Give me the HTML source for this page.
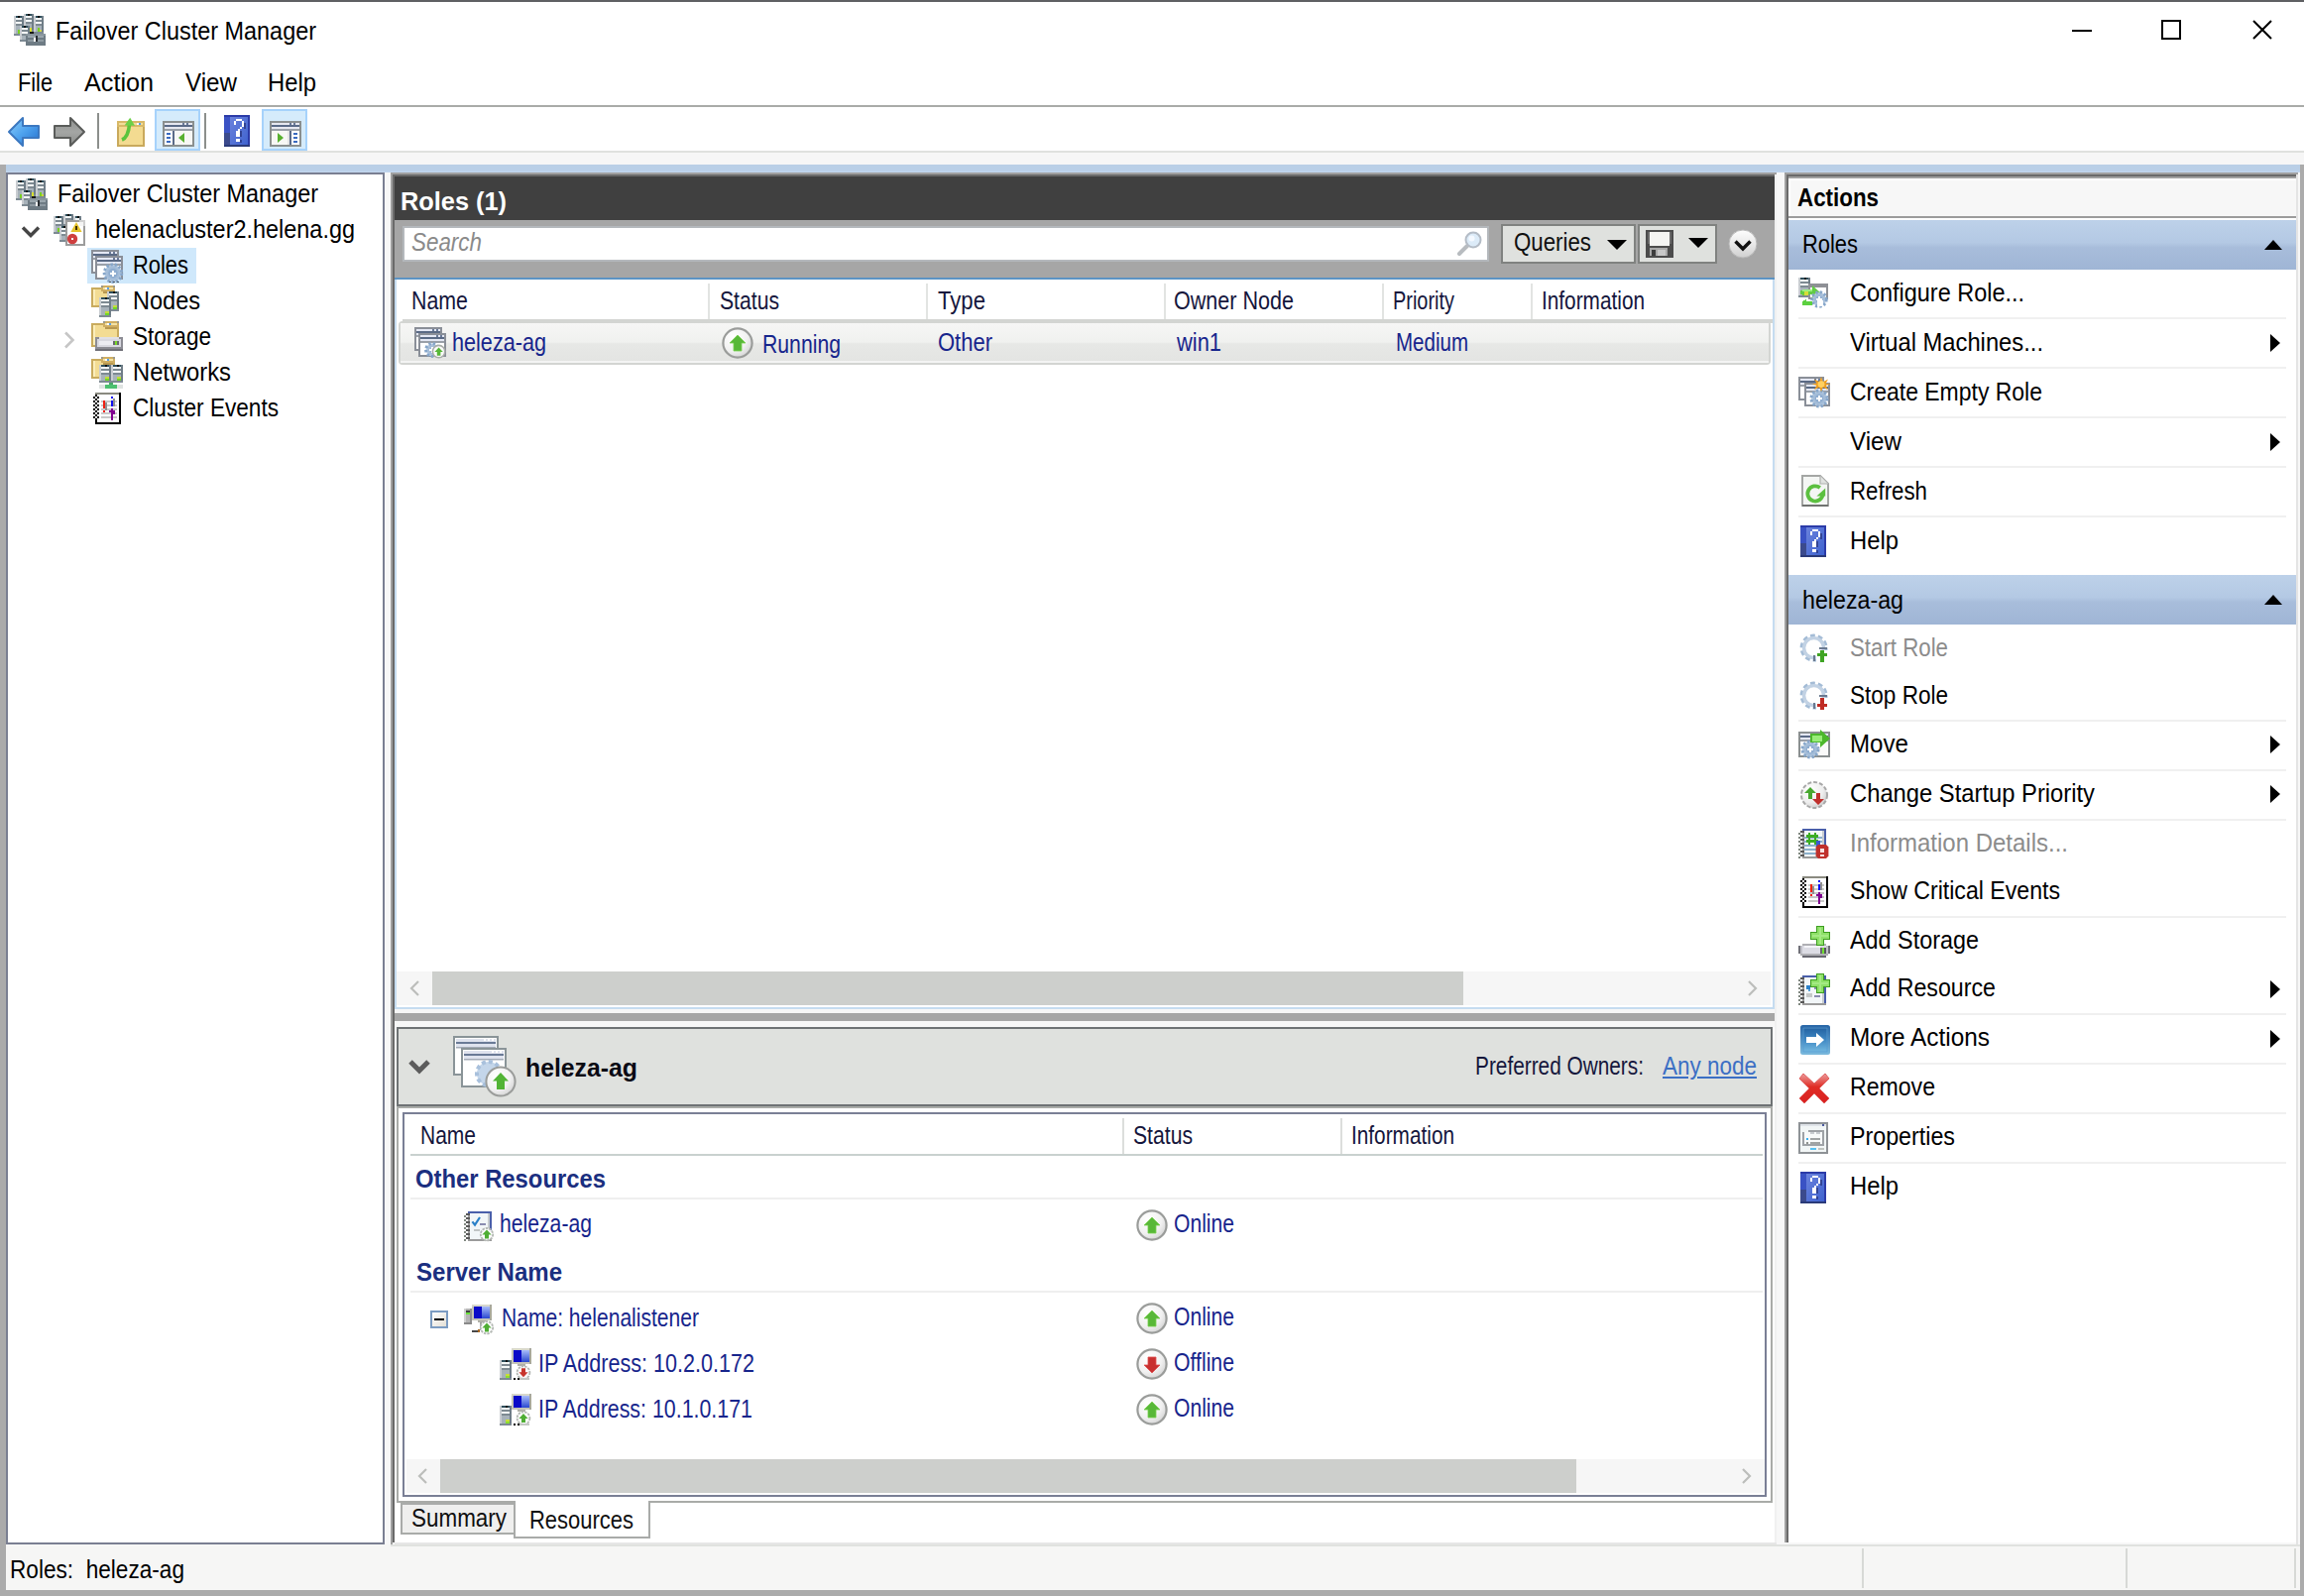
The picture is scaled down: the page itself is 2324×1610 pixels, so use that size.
<!DOCTYPE html>
<html lang="en"><head><meta charset="utf-8"><title>Failover Cluster Manager</title>
<style>
html,body{margin:0;padding:0;background:#fff;}
body{width:2324px;height:1610px;position:relative;overflow:hidden;font-family:"Liberation Sans",sans-serif;}
div,span,svg{position:absolute;box-sizing:border-box;}
span{white-space:pre;transform-origin:0 0;}
svg{overflow:visible;}
</style></head><body>
<div style="left:0px;top:0px;width:2324px;height:2px;background:#5f6063;"></div>
<div style="left:0px;top:106px;width:2324px;height:2px;background:#a9aba8;"></div>
<div style="left:0px;top:152px;width:2324px;height:2px;background:#dfe1de;"></div>
<div style="left:0px;top:154px;width:2324px;height:12px;background:#f6f6f6;"></div>
<div style="left:0px;top:166px;width:2324px;height:1444px;background:#f7f7f7;"></div>
<div style="left:6px;top:166px;width:2314px;height:8px;background:linear-gradient(#b9cfe6,#b9cfe8 70%,#c3d6ee);"></div>
<div style="left:0px;top:166px;width:6px;height:1444px;background:#ababab;"></div>
<div style="left:2320px;top:166px;width:4px;height:1444px;background:#ababab;"></div>
<div style="left:0px;top:1604px;width:2324px;height:6px;background:#ababab;"></div>
<div style="left:156px;top:110px;width:46px;height:42px;background:#d5ebfb;border:2px solid #a6d2fb;"></div>
<div style="left:264px;top:110px;width:46px;height:42px;background:#d5ebfb;border:2px solid #a6d2fb;"></div>
<div style="left:98px;top:114px;width:2px;height:36px;background:#8c8f8c;"></div>
<div style="left:206px;top:114px;width:2px;height:36px;background:#8c8f8c;"></div>
<div style="left:6px;top:174px;width:382px;height:1384px;background:#fff;border:2px solid #7a7f92;"></div>
<div style="left:88px;top:250px;width:110px;height:36px;background:#cfe8fb;"></div>
<div style="left:394px;top:174px;width:1398px;height:1384px;background:#fff;"></div>
<div style="left:394px;top:174px;width:1398px;height:2px;background:#a0a0a0;"></div>
<div style="left:394px;top:174px;width:2px;height:1384px;background:#a0a0a0;"></div>
<div style="left:396px;top:176px;width:1394px;height:2px;background:#6a6a6a;"></div>
<div style="left:396px;top:176px;width:2px;height:1380px;background:#6a6a6a;"></div>
<div style="left:1790px;top:176px;width:2px;height:1382px;background:#f0f0f0;"></div>
<div style="left:398px;top:178px;width:1392px;height:44px;background:#404040;"></div>
<div style="left:398px;top:222px;width:1392px;height:58px;background:#a6a6a6;"></div>
<div style="left:398px;top:280px;width:1392px;height:2px;background:#5b93c4;"></div>
<div style="left:406px;top:228px;width:1096px;height:36px;background:#fff;border:2px solid #b4b8bc;"></div>
<div style="left:1514px;top:226px;width:136px;height:40px;background:#dfe1de;border:2px solid #808280;"></div>
<div style="left:1652px;top:226px;width:80px;height:40px;background:#dfe1de;border:2px solid #808280;"></div>
<div style="left:398px;top:282px;width:2px;height:736px;background:#c5dcf0;"></div>
<div style="left:1788px;top:282px;width:2px;height:736px;background:#c5dcf0;"></div>
<div style="left:398px;top:1016px;width:1392px;height:2px;background:#c5dcf0;"></div>
<div style="left:714px;top:286px;width:2px;height:36px;background:#e2e4e2;"></div>
<div style="left:934px;top:286px;width:2px;height:36px;background:#e2e4e2;"></div>
<div style="left:1174px;top:286px;width:2px;height:36px;background:#e2e4e2;"></div>
<div style="left:1394px;top:286px;width:2px;height:36px;background:#e2e4e2;"></div>
<div style="left:1544px;top:286px;width:2px;height:36px;background:#e2e4e2;"></div>
<div style="left:406px;top:322px;width:1382px;height:4px;background:#d3d5d2;"></div>
<div style="left:402px;top:324px;width:1384px;height:44px;background:#d3d5d2;border-radius:4px;"></div>
<div style="left:404px;top:326px;width:1380px;height:40px;background:linear-gradient(#f6f6f5,#f0f1ef 48%,#e7e8e6 52%,#e3e4e2);"></div>
<div style="left:404px;top:364px;width:1380px;height:2px;background:#f4f4f4;"></div>
<div style="left:400px;top:980px;width:1386px;height:34px;background:#f6f6f6;"></div>
<div style="left:436px;top:980px;width:1040px;height:34px;background:#cdcfcc;"></div>
<div style="left:398px;top:1018px;width:1392px;height:4px;background:#f7f7f7;"></div>
<div style="left:398px;top:1022px;width:1392px;height:8px;background:#a6a6a6;"></div>
<div style="left:398px;top:1030px;width:1392px;height:6px;background:#f7f7f7;"></div>
<div style="left:400px;top:1036px;width:1388px;height:80px;background:#dfe1de;border:2px solid #6e7274;"></div>
<div style="left:400px;top:1116px;width:1388px;height:400px;background:#fff;border:2px solid #a9aba8;"></div>
<div style="left:406px;top:1122px;width:1376px;height:388px;background:#fff;border:2px solid #7a7f95;"></div>
<div style="left:1132px;top:1128px;width:2px;height:36px;background:#dcdedc;"></div>
<div style="left:1352px;top:1128px;width:2px;height:36px;background:#dcdedc;"></div>
<div style="left:414px;top:1164px;width:1364px;height:2px;background:#c9d1cf;"></div>
<div style="left:414px;top:1208px;width:1364px;height:2px;background:#efefef;"></div>
<div style="left:414px;top:1302px;width:1364px;height:2px;background:#efefef;"></div>
<div style="left:410px;top:1472px;width:1370px;height:34px;background:#f6f6f6;"></div>
<div style="left:444px;top:1472px;width:1146px;height:34px;background:#cdcfcc;"></div>
<div style="left:398px;top:1516px;width:1392px;height:40px;background:#fff;"></div>
<div style="left:654px;top:1514px;width:1134px;height:2px;background:#a9aba8;"></div>
<div style="left:404px;top:1516px;width:116px;height:32px;background:#efefee;border:2px solid #a9aba9;"></div>
<div style="left:518px;top:1514px;width:138px;height:38px;background:#fff;border:2px solid #a9aba9;border-top:none;"></div>
<div style="left:398px;top:1556px;width:1394px;height:2px;background:#e6e6e6;"></div>
<div style="left:1800px;top:174px;width:518px;height:1382px;background:#fff;"></div>
<div style="left:1800px;top:174px;width:518px;height:2px;background:#a0a0a0;"></div>
<div style="left:1800px;top:174px;width:2px;height:1382px;background:#a0a0a0;"></div>
<div style="left:1802px;top:176px;width:514px;height:2px;background:#6a6a6a;"></div>
<div style="left:1802px;top:176px;width:2px;height:1380px;background:#6a6a6a;"></div>
<div style="left:1804px;top:178px;width:512px;height:2px;background:#a0a0a0;"></div>
<div style="left:2316px;top:176px;width:2px;height:1382px;background:#e4e4e4;"></div>
<div style="left:1806px;top:182px;width:510px;height:36px;background:#f7f7f7;"></div>
<div style="left:1804px;top:218px;width:512px;height:2px;background:#9c9c9c;"></div>
<div style="left:1804px;top:222px;width:512px;height:50px;background:linear-gradient(#bdd1e9,#b4c9e4 45%,#a8bddb 55%,#9fb5d5);"></div>
<div style="left:1804px;top:580px;width:512px;height:50px;background:linear-gradient(#bdd1e9,#b4c9e4 45%,#a8bddb 55%,#9fb5d5);"></div>
<div style="left:1814px;top:320px;width:492px;height:2px;background:#f0f0f0;"></div>
<div style="left:1814px;top:370px;width:492px;height:2px;background:#f0f0f0;"></div>
<div style="left:1814px;top:420px;width:492px;height:2px;background:#f0f0f0;"></div>
<div style="left:1814px;top:470px;width:492px;height:2px;background:#f0f0f0;"></div>
<div style="left:1814px;top:520px;width:492px;height:2px;background:#f0f0f0;"></div>
<div style="left:1814px;top:726px;width:492px;height:2px;background:#f0f0f0;"></div>
<div style="left:1814px;top:776px;width:492px;height:2px;background:#f0f0f0;"></div>
<div style="left:1814px;top:826px;width:492px;height:2px;background:#f0f0f0;"></div>
<div style="left:1814px;top:924px;width:492px;height:2px;background:#f0f0f0;"></div>
<div style="left:1814px;top:1022px;width:492px;height:2px;background:#f0f0f0;"></div>
<div style="left:1814px;top:1072px;width:492px;height:2px;background:#f0f0f0;"></div>
<div style="left:1814px;top:1122px;width:492px;height:2px;background:#f0f0f0;"></div>
<div style="left:1814px;top:1172px;width:492px;height:2px;background:#f0f0f0;"></div>
<div style="left:6px;top:1558px;width:2314px;height:46px;background:#f6f6f5;"></div>
<div style="left:394px;top:1558px;width:1926px;height:2px;background:#e0e2df;"></div>
<div style="left:1878px;top:1562px;width:2px;height:40px;background:#d7d9d6;"></div>
<div style="left:2144px;top:1562px;width:2px;height:40px;background:#d7d9d6;"></div>
<div style="left:2314px;top:1562px;width:2px;height:40px;background:#d7d9d6;"></div>
<span style="left:56.0px;top:18.8px;font-size:25px;line-height:25px;color:#000;transform:scaleX(0.9370);">Failover Cluster Manager</span>
<span style="left:18.0px;top:70.8px;font-size:25px;line-height:25px;color:#000;transform:scaleX(0.8686);">File</span>
<span style="left:85.0px;top:70.8px;font-size:25px;line-height:25px;color:#000;transform:scaleX(1.0074);">Action</span>
<span style="left:187.0px;top:70.8px;font-size:25px;line-height:25px;color:#000;transform:scaleX(0.9674);">View</span>
<span style="left:270.0px;top:70.8px;font-size:25px;line-height:25px;color:#000;transform:scaleX(0.9529);">Help</span>
<div style="left:2090px;top:30px;width:20px;height:2px;background:#000;"></div>
<div style="left:2180px;top:20px;width:20px;height:20px;border:2px solid #000;"></div>
<svg style="left:2272px;top:20px" width="20" height="20"><path d="M1 1L19 19M19 1L1 19" stroke="#000" stroke-width="2" fill="none"/></svg>
<span style="left:58.0px;top:182.8px;font-size:25px;line-height:25px;color:#000;transform:scaleX(0.9370);">Failover Cluster Manager</span>
<span style="left:96.0px;top:218.8px;font-size:25px;line-height:25px;color:#000;transform:scaleX(0.9378);">helenacluster2.helena.gg</span>
<span style="left:134.0px;top:254.8px;font-size:25px;line-height:25px;color:#000;transform:scaleX(0.8761);">Roles</span>
<span style="left:134.0px;top:290.8px;font-size:25px;line-height:25px;color:#000;transform:scaleX(0.9410);">Nodes</span>
<span style="left:134.0px;top:326.8px;font-size:25px;line-height:25px;color:#000;transform:scaleX(0.9022);">Storage</span>
<span style="left:134.0px;top:362.8px;font-size:25px;line-height:25px;color:#000;transform:scaleX(0.9502);">Networks</span>
<span style="left:134.0px;top:398.8px;font-size:25px;line-height:25px;color:#000;transform:scaleX(0.9043);">Cluster Events</span>
<span style="left:404.0px;top:190.0px;font-size:26px;line-height:26px;color:#fff;font-weight:700;transform:scaleX(0.9744);">Roles (1)</span>
<span style="left:415.0px;top:231.8px;font-size:25px;line-height:25px;color:#8a8a8a;font-style:italic;transform:scaleX(0.8963);">Search</span>
<span style="left:1527.0px;top:231.8px;font-size:25px;line-height:25px;color:#101010;transform:scaleX(0.8910);">Queries</span>
<span style="left:415.0px;top:290.8px;font-size:25px;line-height:25px;color:#15163c;transform:scaleX(0.8547);">Name</span>
<span style="left:726.0px;top:290.8px;font-size:25px;line-height:25px;color:#15163c;transform:scaleX(0.8466);">Status</span>
<span style="left:946.0px;top:290.8px;font-size:25px;line-height:25px;color:#15163c;transform:scaleX(0.8856);">Type</span>
<span style="left:1184.0px;top:290.8px;font-size:25px;line-height:25px;color:#15163c;transform:scaleX(0.8621);">Owner Node</span>
<span style="left:1405.0px;top:290.8px;font-size:25px;line-height:25px;color:#15163c;transform:scaleX(0.7969);">Priority</span>
<span style="left:1555.0px;top:290.8px;font-size:25px;line-height:25px;color:#15163c;transform:scaleX(0.8316);">Information</span>
<span style="left:456.0px;top:332.8px;font-size:25px;line-height:25px;color:#17258c;transform:scaleX(0.8651);">heleza-ag</span>
<span style="left:769.0px;top:334.8px;font-size:25px;line-height:25px;color:#17258c;transform:scaleX(0.8482);">Running</span>
<span style="left:946.0px;top:332.8px;font-size:25px;line-height:25px;color:#17258c;transform:scaleX(0.8796);">Other</span>
<span style="left:1187.0px;top:332.8px;font-size:25px;line-height:25px;color:#17258c;transform:scaleX(0.8751);">win1</span>
<span style="left:1408.0px;top:332.8px;font-size:25px;line-height:25px;color:#17258c;transform:scaleX(0.8209);">Medium</span>
<span style="left:530.0px;top:1064.8px;font-size:25px;line-height:25px;color:#0a0a14;font-weight:700;transform:scaleX(0.9918);">heleza-ag</span>
<span style="left:1488.0px;top:1062.8px;font-size:25px;line-height:25px;color:#15163c;transform:scaleX(0.8323);">Preferred Owners:</span>
<span style="left:1677.0px;top:1062.8px;font-size:25px;line-height:25px;color:#3c6fc4;text-decoration:underline;transform:scaleX(0.8993);">Any node</span>
<span style="left:424.0px;top:1132.8px;font-size:25px;line-height:25px;color:#15163c;transform:scaleX(0.8397);">Name</span>
<span style="left:1143.0px;top:1132.8px;font-size:25px;line-height:25px;color:#15163c;transform:scaleX(0.8466);">Status</span>
<span style="left:1363.0px;top:1132.8px;font-size:25px;line-height:25px;color:#15163c;transform:scaleX(0.8316);">Information</span>
<span style="left:419.0px;top:1176.8px;font-size:25px;line-height:25px;color:#1b2f80;font-weight:700;transform:scaleX(0.9530);">Other Resources</span>
<span style="left:420.0px;top:1270.8px;font-size:25px;line-height:25px;color:#1b2f80;font-weight:700;transform:scaleX(0.9615);">Server Name</span>
<span style="left:504.0px;top:1221.8px;font-size:25px;line-height:25px;color:#17258c;transform:scaleX(0.8469);">heleza-ag</span>
<span style="left:506.0px;top:1316.8px;font-size:25px;line-height:25px;color:#17258c;transform:scaleX(0.8423);">Name: helenalistener</span>
<span style="left:543.0px;top:1362.8px;font-size:25px;line-height:25px;color:#17258c;transform:scaleX(0.8633);">IP Address: 10.2.0.172</span>
<span style="left:543.0px;top:1408.8px;font-size:25px;line-height:25px;color:#17258c;transform:scaleX(0.8554);">IP Address: 10.1.0.171</span>
<span style="left:1184.0px;top:1221.8px;font-size:25px;line-height:25px;color:#17258c;transform:scaleX(0.8441);">Online</span>
<span style="left:1184.0px;top:1315.8px;font-size:25px;line-height:25px;color:#17258c;transform:scaleX(0.8441);">Online</span>
<span style="left:1184.0px;top:1361.8px;font-size:25px;line-height:25px;color:#17258c;transform:scaleX(0.8494);">Offline</span>
<span style="left:1184.0px;top:1407.8px;font-size:25px;line-height:25px;color:#17258c;transform:scaleX(0.8441);">Online</span>
<span style="left:415.0px;top:1518.8px;font-size:25px;line-height:25px;color:#101010;transform:scaleX(0.8975);">Summary</span>
<span style="left:534.0px;top:1520.8px;font-size:25px;line-height:25px;color:#101010;transform:scaleX(0.8787);">Resources</span>
<span style="left:1813.0px;top:186.8px;font-size:25px;line-height:25px;color:#000;font-weight:700;transform:scaleX(0.8943);">Actions</span>
<span style="left:1818.0px;top:233.8px;font-size:25px;line-height:25px;color:#000;transform:scaleX(0.8761);">Roles</span>
<span style="left:1818.0px;top:592.8px;font-size:25px;line-height:25px;color:#000;transform:scaleX(0.9289);">heleza-ag</span>
<span style="left:1866.0px;top:282.8px;font-size:25px;line-height:25px;color:#000;transform:scaleX(0.9381);">Configure Role...</span>
<span style="left:1866.0px;top:332.8px;font-size:25px;line-height:25px;color:#000;transform:scaleX(0.9503);">Virtual Machines...</span>
<span style="left:1866.0px;top:382.8px;font-size:25px;line-height:25px;color:#000;transform:scaleX(0.9185);">Create Empty Role</span>
<span style="left:1866.0px;top:432.8px;font-size:25px;line-height:25px;color:#000;transform:scaleX(0.9674);">View</span>
<span style="left:1866.0px;top:482.8px;font-size:25px;line-height:25px;color:#000;transform:scaleX(0.8910);">Refresh</span>
<span style="left:1866.0px;top:532.8px;font-size:25px;line-height:25px;color:#000;transform:scaleX(0.9529);">Help</span>
<span style="left:1866.0px;top:640.8px;font-size:25px;line-height:25px;color:#8c8c8c;transform:scaleX(0.8905);">Start Role</span>
<span style="left:1866.0px;top:688.8px;font-size:25px;line-height:25px;color:#000;transform:scaleX(0.9017);">Stop Role</span>
<span style="left:1866.0px;top:737.8px;font-size:25px;line-height:25px;color:#000;transform:scaleX(0.9650);">Move</span>
<span style="left:1866.0px;top:787.8px;font-size:25px;line-height:25px;color:#000;transform:scaleX(0.9505);">Change Startup Priority</span>
<span style="left:1866.0px;top:837.8px;font-size:25px;line-height:25px;color:#8c8c8c;transform:scaleX(0.9596);">Information Details...</span>
<span style="left:1866.0px;top:885.8px;font-size:25px;line-height:25px;color:#000;transform:scaleX(0.9248);">Show Critical Events</span>
<span style="left:1866.0px;top:935.8px;font-size:25px;line-height:25px;color:#000;transform:scaleX(0.9353);">Add Storage</span>
<span style="left:1866.0px;top:983.8px;font-size:25px;line-height:25px;color:#000;transform:scaleX(0.9278);">Add Resource</span>
<span style="left:1866.0px;top:1033.8px;font-size:25px;line-height:25px;color:#000;transform:scaleX(0.9757);">More Actions</span>
<span style="left:1866.0px;top:1083.8px;font-size:25px;line-height:25px;color:#000;transform:scaleX(0.9238);">Remove</span>
<span style="left:1866.0px;top:1133.8px;font-size:25px;line-height:25px;color:#000;transform:scaleX(0.9302);">Properties</span>
<span style="left:1866.0px;top:1183.8px;font-size:25px;line-height:25px;color:#000;transform:scaleX(0.9529);">Help</span>
<span style="left:10.0px;top:1570.8px;font-size:25px;line-height:25px;color:#000;transform:scaleX(0.9046);">Roles:  heleza-ag</span>
<svg style="left:14px;top:14px" width="32" height="32" viewBox="0 0 16 16" shape-rendering="crispEdges"><rect x="5" y="0" width="5" height="9" fill="#a7b2ba"/><rect x="5" y="0" width="1" height="9" fill="#c9cdd1"/><rect x="9" y="0" width="1" height="9" fill="#6f7d87"/><rect x="6" y="0" width="3" height="1" fill="#2f4f5c"/><rect x="7" y="0" width="1" height="1" fill="#101010"/><rect x="6" y="1" width="3" height="1" fill="#f4f8f8"/><rect x="6" y="2" width="3" height="1" fill="#7e8a92"/><rect x="6" y="3" width="3" height="1" fill="#f4f8f8"/><rect x="6" y="4" width="3" height="1" fill="#7e8a92"/><rect x="5" y="8" width="5" height="1" fill="#7d8a93"/><rect x="0" y="1" width="5" height="10" fill="#a7b2ba"/><rect x="0" y="1" width="1" height="10" fill="#c9cdd1"/><rect x="4" y="1" width="1" height="10" fill="#6f7d87"/><rect x="1" y="1" width="3" height="1" fill="#2f4f5c"/><rect x="2" y="1" width="1" height="1" fill="#101010"/><rect x="1" y="2" width="3" height="1" fill="#f4f8f8"/><rect x="1" y="3" width="3" height="1" fill="#7e8a92"/><rect x="1" y="4" width="3" height="1" fill="#f4f8f8"/><rect x="1" y="5" width="3" height="1" fill="#7e8a92"/><rect x="2" y="8" width="1" height="2" fill="#7ad022"/><rect x="0" y="10" width="5" height="1" fill="#7d8a93"/><rect x="10" y="1" width="5" height="9" fill="#a7b2ba"/><rect x="10" y="1" width="1" height="9" fill="#c9cdd1"/><rect x="14" y="1" width="1" height="9" fill="#6f7d87"/><rect x="11" y="1" width="3" height="1" fill="#2f4f5c"/><rect x="12" y="1" width="1" height="1" fill="#101010"/><rect x="11" y="2" width="3" height="1" fill="#f4f8f8"/><rect x="11" y="3" width="3" height="1" fill="#7e8a92"/><rect x="11" y="4" width="3" height="1" fill="#f4f8f8"/><rect x="11" y="5" width="3" height="1" fill="#7e8a92"/><rect x="12" y="7" width="1" height="2" fill="#7ad022"/><rect x="10" y="9" width="5" height="1" fill="#7d8a93"/><rect x="8" y="7" width="1" height="2" fill="#d8e030"/><rect x="13" y="8" width="1" height="1" fill="#d0d840"/><rect x="3" y="6" width="5" height="8" fill="#a7b2ba"/><rect x="3" y="6" width="1" height="8" fill="#c9cdd1"/><rect x="7" y="6" width="1" height="8" fill="#6f7d87"/><rect x="4" y="6" width="3" height="1" fill="#2f4f5c"/><rect x="5" y="6" width="1" height="1" fill="#101010"/><rect x="4" y="7" width="3" height="1" fill="#f4f8f8"/><rect x="4" y="8" width="3" height="1" fill="#7e8a92"/><rect x="4" y="9" width="3" height="1" fill="#f4f8f8"/><rect x="4" y="10" width="3" height="1" fill="#7e8a92"/><rect x="3" y="13" width="5" height="1" fill="#7d8a93"/><rect x="6" y="10" width="10" height="6" fill="#6e7b84"/><rect x="6" y="10" width="10" height="1" fill="#8a969e"/><rect x="7" y="11" width="8" height="1" fill="#9aa6ad"/><rect x="7" y="13" width="8" height="1" fill="#8e9aa2"/><rect x="10" y="12" width="1" height="2" fill="#fff"/><rect x="11" y="11" width="1" height="3" fill="#2a2f33"/><rect x="8" y="9" width="2" height="1" fill="#181818"/></svg>
<svg style="left:16px;top:180px" width="32" height="32" viewBox="0 0 16 16" shape-rendering="crispEdges"><rect x="5" y="0" width="5" height="9" fill="#a7b2ba"/><rect x="5" y="0" width="1" height="9" fill="#c9cdd1"/><rect x="9" y="0" width="1" height="9" fill="#6f7d87"/><rect x="6" y="0" width="3" height="1" fill="#2f4f5c"/><rect x="7" y="0" width="1" height="1" fill="#101010"/><rect x="6" y="1" width="3" height="1" fill="#f4f8f8"/><rect x="6" y="2" width="3" height="1" fill="#7e8a92"/><rect x="6" y="3" width="3" height="1" fill="#f4f8f8"/><rect x="6" y="4" width="3" height="1" fill="#7e8a92"/><rect x="5" y="8" width="5" height="1" fill="#7d8a93"/><rect x="0" y="1" width="5" height="10" fill="#a7b2ba"/><rect x="0" y="1" width="1" height="10" fill="#c9cdd1"/><rect x="4" y="1" width="1" height="10" fill="#6f7d87"/><rect x="1" y="1" width="3" height="1" fill="#2f4f5c"/><rect x="2" y="1" width="1" height="1" fill="#101010"/><rect x="1" y="2" width="3" height="1" fill="#f4f8f8"/><rect x="1" y="3" width="3" height="1" fill="#7e8a92"/><rect x="1" y="4" width="3" height="1" fill="#f4f8f8"/><rect x="1" y="5" width="3" height="1" fill="#7e8a92"/><rect x="2" y="8" width="1" height="2" fill="#7ad022"/><rect x="0" y="10" width="5" height="1" fill="#7d8a93"/><rect x="10" y="1" width="5" height="9" fill="#a7b2ba"/><rect x="10" y="1" width="1" height="9" fill="#c9cdd1"/><rect x="14" y="1" width="1" height="9" fill="#6f7d87"/><rect x="11" y="1" width="3" height="1" fill="#2f4f5c"/><rect x="12" y="1" width="1" height="1" fill="#101010"/><rect x="11" y="2" width="3" height="1" fill="#f4f8f8"/><rect x="11" y="3" width="3" height="1" fill="#7e8a92"/><rect x="11" y="4" width="3" height="1" fill="#f4f8f8"/><rect x="11" y="5" width="3" height="1" fill="#7e8a92"/><rect x="12" y="7" width="1" height="2" fill="#7ad022"/><rect x="10" y="9" width="5" height="1" fill="#7d8a93"/><rect x="8" y="7" width="1" height="2" fill="#d8e030"/><rect x="13" y="8" width="1" height="1" fill="#d0d840"/><rect x="3" y="6" width="5" height="8" fill="#a7b2ba"/><rect x="3" y="6" width="1" height="8" fill="#c9cdd1"/><rect x="7" y="6" width="1" height="8" fill="#6f7d87"/><rect x="4" y="6" width="3" height="1" fill="#2f4f5c"/><rect x="5" y="6" width="1" height="1" fill="#101010"/><rect x="4" y="7" width="3" height="1" fill="#f4f8f8"/><rect x="4" y="8" width="3" height="1" fill="#7e8a92"/><rect x="4" y="9" width="3" height="1" fill="#f4f8f8"/><rect x="4" y="10" width="3" height="1" fill="#7e8a92"/><rect x="3" y="13" width="5" height="1" fill="#7d8a93"/><rect x="6" y="10" width="10" height="6" fill="#6e7b84"/><rect x="6" y="10" width="10" height="1" fill="#8a969e"/><rect x="7" y="11" width="8" height="1" fill="#9aa6ad"/><rect x="7" y="13" width="8" height="1" fill="#8e9aa2"/><rect x="10" y="12" width="1" height="2" fill="#fff"/><rect x="11" y="11" width="1" height="3" fill="#2a2f33"/><rect x="8" y="9" width="2" height="1" fill="#181818"/></svg>
<svg style="left:54px;top:216px" width="32" height="32" viewBox="0 0 16 16" shape-rendering="crispEdges"><rect x="5" y="0" width="5" height="6" fill="#a7b2ba"/><rect x="5" y="0" width="1" height="6" fill="#c9cdd1"/><rect x="9" y="0" width="1" height="6" fill="#6f7d87"/><rect x="6" y="0" width="3" height="1" fill="#2f4f5c"/><rect x="7" y="0" width="1" height="1" fill="#101010"/><rect x="6" y="1" width="3" height="1" fill="#f4f8f8"/><rect x="6" y="2" width="3" height="1" fill="#7e8a92"/><rect x="6" y="3" width="3" height="1" fill="#f4f8f8"/><rect x="6" y="4" width="3" height="1" fill="#7e8a92"/><rect x="5" y="5" width="5" height="1" fill="#7d8a93"/><rect x="10" y="1" width="4" height="5" fill="#a7b2ba"/><rect x="10" y="1" width="1" height="5" fill="#c9cdd1"/><rect x="13" y="1" width="1" height="5" fill="#6f7d87"/><rect x="11" y="1" width="2" height="1" fill="#2f4f5c"/><rect x="12" y="1" width="1" height="1" fill="#101010"/><rect x="11" y="2" width="2" height="1" fill="#f4f8f8"/><rect x="11" y="3" width="2" height="1" fill="#7e8a92"/><rect x="11" y="4" width="2" height="1" fill="#f4f8f8"/><rect x="10" y="5" width="4" height="1" fill="#7d8a93"/><rect x="0" y="1" width="5" height="9" fill="#a7b2ba"/><rect x="0" y="1" width="1" height="9" fill="#c9cdd1"/><rect x="4" y="1" width="1" height="9" fill="#6f7d87"/><rect x="1" y="1" width="3" height="1" fill="#2f4f5c"/><rect x="2" y="1" width="1" height="1" fill="#101010"/><rect x="1" y="2" width="3" height="1" fill="#f4f8f8"/><rect x="1" y="3" width="3" height="1" fill="#7e8a92"/><rect x="1" y="4" width="3" height="1" fill="#f4f8f8"/><rect x="1" y="5" width="3" height="1" fill="#7e8a92"/><rect x="2" y="7" width="1" height="2" fill="#7ad022"/><rect x="0" y="9" width="5" height="1" fill="#7d8a93"/><rect x="3" y="6" width="4" height="8" fill="#a7b2ba"/><rect x="3" y="6" width="1" height="8" fill="#c9cdd1"/><rect x="6" y="6" width="1" height="8" fill="#6f7d87"/><rect x="4" y="6" width="2" height="1" fill="#2f4f5c"/><rect x="5" y="6" width="1" height="1" fill="#101010"/><rect x="4" y="7" width="2" height="1" fill="#f4f8f8"/><rect x="4" y="8" width="2" height="1" fill="#7e8a92"/><rect x="4" y="9" width="2" height="1" fill="#f4f8f8"/><rect x="4" y="10" width="2" height="1" fill="#7e8a92"/><rect x="3" y="13" width="4" height="1" fill="#7d8a93"/><rect x="6" y="3" width="10" height="13" fill="#9c9c9c"/><rect x="7" y="4" width="8" height="11" fill="#fff"/><rect x="13" y="3" width="3" height="3" fill="#d0d0d0"/><rect x="13" y="4" width="2" height="2" fill="#f4f4f4"/><polygon points="11.5,4 14.3,9 8.7,9" fill="#e6c42c" shape-rendering="auto"/><rect x="11" y="6" width="1" height="2" fill="#403000"/><circle cx="9.5" cy="12.5" r="2.6" fill="#cf3f3f" shape-rendering="auto"/><rect x="9" y="12" width="1" height="1" fill="#fff"/></svg>
<svg style="left:92px;top:252px" width="32" height="34" viewBox="0 0 16 17" shape-rendering="crispEdges"><rect x="0" y="0" width="14" height="12" fill="#8a8f98"/><rect x="1" y="1" width="12" height="10" fill="#fff"/><rect x="1" y="1" width="12" height="1" fill="#e4e8f4"/><rect x="9" y="1" width="1" height="1" fill="#6a7a98"/><rect x="11" y="1" width="1" height="1" fill="#6a7a98"/><rect x="1" y="2" width="12" height="1" fill="#5a6a85"/><rect x="1" y="3" width="12" height="1" fill="#e4e8f4"/><rect x="1" y="4" width="12" height="1" fill="#9aa0a8"/><rect x="2" y="3" width="14" height="12" fill="#8a8f98"/><rect x="3" y="4" width="12" height="10" fill="#fff"/><rect x="3" y="4" width="12" height="1" fill="#e4e8f4"/><rect x="11" y="4" width="1" height="1" fill="#6a7a98"/><rect x="13" y="4" width="1" height="1" fill="#6a7a98"/><rect x="3" y="5" width="12" height="1" fill="#5a6a85"/><rect x="3" y="6" width="12" height="1" fill="#e4e8f4"/><rect x="3" y="7" width="12" height="1" fill="#9aa0a8"/><g shape-rendering="auto"><circle cx="11" cy="11.8" r="4.4" fill="#b4c8de" stroke="#86a6ca" stroke-width="1.5" stroke-dasharray="1.15 1.0"/><circle cx="11" cy="11.8" r="3.5000000000000004" fill="#a3bcd8"/><circle cx="11" cy="11.8" r="2.4000000000000004" fill="#8fadd0"/></g><rect x="9.5" y="11.3" width="3" height="1" fill="#fff"/><rect x="10.5" y="10.3" width="1" height="3" fill="#fff"/><rect x="9" y="16" width="1" height="0.6" fill="#505860"/><rect x="11" y="16" width="1" height="0.6" fill="#505860"/><rect x="13" y="16" width="1" height="0.6" fill="#505860"/></svg>
<svg style="left:92px;top:288px" width="32" height="32" viewBox="0 0 16 16" shape-rendering="crispEdges"><rect x="0" y="1" width="12" height="10" fill="#c9ab5e"/><rect x="1" y="2" width="10" height="8" fill="#f3dc93"/><rect x="1" y="2" width="1" height="8" fill="#fbeebb"/><rect x="5" y="0" width="7" height="3" fill="#cfae62"/><rect x="6" y="1" width="5" height="1" fill="#f4e2a4"/><rect x="5" y="0" width="1" height="1" fill="#9a9a90"/><rect x="11" y="0" width="1" height="1" fill="#9a9a90"/><rect x="7" y="1" width="1" height="1" fill="#fff"/><rect x="8" y="1" width="1" height="1" fill="#58a0e8"/><rect x="6" y="3" width="5" height="1" fill="#b89850"/><rect x="8" y="3" width="6" height="10" fill="#a7b2ba"/><rect x="8" y="3" width="1" height="10" fill="#c9cdd1"/><rect x="13" y="3" width="1" height="10" fill="#6f7d87"/><rect x="9" y="3" width="4" height="1" fill="#2f4f5c"/><rect x="11" y="3" width="1" height="1" fill="#101010"/><rect x="9" y="4" width="4" height="1" fill="#f4f8f8"/><rect x="9" y="5" width="4" height="1" fill="#7e8a92"/><rect x="9" y="6" width="4" height="1" fill="#f4f8f8"/><rect x="9" y="7" width="4" height="1" fill="#7e8a92"/><rect x="11" y="10" width="2" height="1" fill="#c4dc3c"/><rect x="11" y="11" width="2" height="1" fill="#70d828"/><rect x="8" y="12" width="6" height="1" fill="#7d8a93"/><rect x="4" y="6" width="6" height="10" fill="#a7b2ba"/><rect x="4" y="6" width="1" height="10" fill="#c9cdd1"/><rect x="9" y="6" width="1" height="10" fill="#6f7d87"/><rect x="5" y="6" width="4" height="1" fill="#2f4f5c"/><rect x="7" y="6" width="1" height="1" fill="#101010"/><rect x="5" y="7" width="4" height="1" fill="#f4f8f8"/><rect x="5" y="8" width="4" height="1" fill="#7e8a92"/><rect x="5" y="9" width="4" height="1" fill="#f4f8f8"/><rect x="5" y="10" width="4" height="1" fill="#7e8a92"/><rect x="7" y="13" width="2" height="1" fill="#c4dc3c"/><rect x="7" y="14" width="2" height="1" fill="#70d828"/><rect x="4" y="15" width="6" height="1" fill="#7d8a93"/></svg>
<svg style="left:92px;top:324px" width="32" height="32" viewBox="0 0 16 16" shape-rendering="crispEdges"><rect x="0" y="1" width="14" height="12" fill="#c9ab5e"/><rect x="1" y="2" width="12" height="10" fill="#f3dc93"/><rect x="1" y="2" width="1" height="10" fill="#fbeebb"/><rect x="6" y="0" width="8" height="3" fill="#cfae62"/><rect x="7" y="1" width="6" height="1" fill="#f4e2a4"/><rect x="6" y="0" width="1" height="1" fill="#9a9a90"/><rect x="13" y="0" width="1" height="1" fill="#9a9a90"/><rect x="8" y="1" width="1" height="1" fill="#fff"/><rect x="9" y="1" width="1" height="1" fill="#58a0e8"/><rect x="7" y="3" width="6" height="1" fill="#b89850"/><rect x="2" y="8" width="14" height="7" fill="#8c8c94"/><rect x="4" y="8" width="10" height="1" fill="#e0e0e4"/><rect x="3" y="9" width="12" height="4" fill="#d8d8e0"/><rect x="4" y="10" width="7" height="2" fill="#ececf2"/><rect x="11" y="10" width="1" height="2" fill="#686870"/><rect x="12" y="10" width="1" height="2" fill="#78d828"/><rect x="13" y="10" width="1" height="2" fill="#686870"/><rect x="2" y="14" width="14" height="1" fill="#707078"/></svg>
<svg style="left:92px;top:360px" width="32" height="32" viewBox="0 0 16 16" shape-rendering="crispEdges"><rect x="0" y="1" width="12" height="10" fill="#c9ab5e"/><rect x="1" y="2" width="10" height="8" fill="#f3dc93"/><rect x="1" y="2" width="1" height="8" fill="#fbeebb"/><rect x="5" y="0" width="7" height="3" fill="#cfae62"/><rect x="6" y="1" width="5" height="1" fill="#f4e2a4"/><rect x="5" y="0" width="1" height="1" fill="#9a9a90"/><rect x="11" y="0" width="1" height="1" fill="#9a9a90"/><rect x="7" y="1" width="1" height="1" fill="#fff"/><rect x="8" y="1" width="1" height="1" fill="#58a0e8"/><rect x="6" y="3" width="5" height="1" fill="#b89850"/><rect x="4" y="4" width="6" height="9" fill="#a7b2ba"/><rect x="4" y="4" width="1" height="9" fill="#c9cdd1"/><rect x="9" y="4" width="1" height="9" fill="#6f7d87"/><rect x="5" y="4" width="4" height="1" fill="#2f4f5c"/><rect x="7" y="4" width="1" height="1" fill="#101010"/><rect x="5" y="5" width="4" height="1" fill="#f4f8f8"/><rect x="5" y="6" width="4" height="1" fill="#7e8a92"/><rect x="5" y="7" width="4" height="1" fill="#f4f8f8"/><rect x="5" y="8" width="4" height="1" fill="#7e8a92"/><rect x="7" y="10" width="2" height="1" fill="#c4dc3c"/><rect x="7" y="11" width="2" height="1" fill="#70d828"/><rect x="4" y="12" width="6" height="1" fill="#7d8a93"/><rect x="10" y="4" width="6" height="9" fill="#a7b2ba"/><rect x="10" y="4" width="1" height="9" fill="#c9cdd1"/><rect x="15" y="4" width="1" height="9" fill="#6f7d87"/><rect x="11" y="4" width="4" height="1" fill="#2f4f5c"/><rect x="13" y="4" width="1" height="1" fill="#101010"/><rect x="11" y="5" width="4" height="1" fill="#f4f8f8"/><rect x="11" y="6" width="4" height="1" fill="#7e8a92"/><rect x="11" y="7" width="4" height="1" fill="#f4f8f8"/><rect x="11" y="8" width="4" height="1" fill="#7e8a92"/><rect x="13" y="10" width="2" height="1" fill="#c4dc3c"/><rect x="13" y="11" width="2" height="1" fill="#70d828"/><rect x="10" y="12" width="6" height="1" fill="#7d8a93"/><rect x="9" y="13" width="2" height="1" fill="#48a868"/><rect x="4" y="14" width="12" height="2" fill="#dfe3e1"/><rect x="7" y="14" width="6" height="2" fill="#4cc070"/></svg>
<svg style="left:92px;top:396px" width="32" height="32" viewBox="0 0 16 16" shape-rendering="crispEdges"><rect x="2" y="0" width="13" height="16" fill="#000"/><rect x="2" y="0" width="12" height="1" fill="#8a8a80"/><rect x="3" y="1" width="11" height="14" fill="#fff"/><rect x="1" y="1" width="3" height="13" fill="#fff"/><rect x="2" y="1" width="1" height="1" fill="#000"/><rect x="1" y="2" width="1" height="1" fill="#000"/><rect x="3" y="2" width="1" height="1" fill="#000"/><rect x="2" y="3" width="1" height="1" fill="#000"/><rect x="1" y="4" width="1" height="1" fill="#000"/><rect x="3" y="4" width="1" height="1" fill="#000"/><rect x="2" y="5" width="1" height="1" fill="#000"/><rect x="1" y="6" width="1" height="1" fill="#000"/><rect x="3" y="6" width="1" height="1" fill="#000"/><rect x="2" y="7" width="1" height="1" fill="#000"/><rect x="1" y="8" width="1" height="1" fill="#000"/><rect x="3" y="8" width="1" height="1" fill="#000"/><rect x="2" y="9" width="1" height="1" fill="#000"/><rect x="1" y="10" width="1" height="1" fill="#000"/><rect x="3" y="10" width="1" height="1" fill="#000"/><rect x="2" y="11" width="1" height="1" fill="#000"/><rect x="1" y="12" width="1" height="1" fill="#000"/><rect x="3" y="12" width="1" height="1" fill="#000"/><rect x="2" y="13" width="1" height="1" fill="#000"/><rect x="2" y="14" width="1" height="2" fill="#000"/><rect x="5" y="4" width="8" height="1" fill="#c8c8c8"/><rect x="5" y="6" width="8" height="1" fill="#c8c8c8"/><rect x="5" y="8" width="8" height="1" fill="#c8c8c8"/><rect x="5" y="10" width="8" height="1" fill="#c8c8c8"/><rect x="5" y="12" width="8" height="1" fill="#c8c8c8"/><rect x="6" y="4" width="1" height="4" fill="#f02010"/><rect x="6" y="9" width="1" height="1" fill="#f02010"/><rect x="7" y="5" width="1" height="4" fill="#909090"/><rect x="10" y="2" width="1" height="1" fill="#1010f0"/><rect x="10" y="4" width="1" height="3" fill="#1010f0"/><rect x="11" y="3" width="1" height="4" fill="#909090"/><rect x="10" y="8" width="1" height="6" fill="#800090"/><rect x="9" y="9" width="1" height="1" fill="#800090"/><rect x="11" y="9" width="1" height="2" fill="#800090"/></svg>
<svg style="left:22px;top:228px" width="18" height="12"><path d="M1 1.5 L9 9.5 L17 1.5" stroke="#454545" stroke-width="3.4" fill="none"/></svg>
<svg style="left:64px;top:334px" width="12" height="18"><path d="M2 1.5 L9.5 9 L2 16.5" stroke="#c6c6c6" stroke-width="2.6" fill="none"/></svg>
<svg style="left:8px;top:118px" width="32" height="30" viewBox="0 0 32 30"><defs><linearGradient id="ba" x1="0" y1="0" x2="1" y2="1"><stop offset="0" stop-color="#8fd0fb"/><stop offset=".5" stop-color="#4ea2ee"/><stop offset="1" stop-color="#2470cc"/></linearGradient></defs><path d="M1 15 L15 1 V9 H31 V21 H15 V29 Z" fill="url(#ba)" stroke="#3c78c0" stroke-width="2" stroke-linejoin="round"/></svg>
<svg style="left:54px;top:118px" width="32" height="30" viewBox="0 0 32 30"><defs><linearGradient id="fa" x1="0" y1="0" x2="0" y2="1"><stop offset="0" stop-color="#8e908e"/><stop offset=".5" stop-color="#a4a6a4"/><stop offset="1" stop-color="#8a8c8a"/></linearGradient></defs><path d="M31 15 L17 1 V9 H1 V21 H17 V29 Z" fill="url(#fa)" stroke="#5a5c5a" stroke-width="2" stroke-linejoin="round"/></svg>
<svg style="left:118px;top:118px" width="28" height="30" viewBox="0 0 14 15" shape-rendering="crispEdges"><rect x="0" y="2" width="14" height="13" fill="#c9a95c"/><rect x="1" y="3" width="12" height="11" fill="#f3db91"/><rect x="0" y="2" width="14" height="3" fill="#d8b968"/><rect x="1" y="3" width="12" height="1" fill="#f2dc9a"/><rect x="10" y="3" width="1" height="1" fill="#fff"/><rect x="11" y="3" width="1" height="1" fill="#58a0e8"/><path d="M2.5 11.5 C5 10.5 6 7 6.3 3.5" stroke="#5cc43c" stroke-width="1.8" fill="none" shape-rendering="auto"/><polygon points="3.8,4.2 6.6,0.4 9,4.4" fill="#6cd048" shape-rendering="auto"/></svg>
<svg style="left:164px;top:122px" width="32" height="26" viewBox="0 0 16 13" shape-rendering="crispEdges"><rect x="0" y="0" width="16" height="13" fill="#8a8f8f"/><rect x="1" y="1" width="14" height="1" fill="#e6e8f0"/><rect x="10" y="1" width="1" height="1" fill="#6a7a98"/><rect x="12" y="1" width="1" height="1" fill="#6a7a98"/><rect x="1" y="2" width="14" height="1" fill="#5a6a88"/><rect x="1" y="3" width="14" height="1" fill="#e6e8f0"/><rect x="1" y="4" width="14" height="1" fill="#9aa0a8"/><rect x="1" y="5" width="4" height="7" fill="#fff"/><rect x="5" y="5" width="1" height="7" fill="#5a6a88"/><rect x="6" y="5" width="9" height="7" fill="#f7f7f5"/><rect x="2" y="6" width="2" height="1" fill="#3a6ac0"/><rect x="2" y="8" width="2" height="1" fill="#3a6ac0"/><rect x="2" y="10" width="2" height="1" fill="#3a6ac0"/><polygon points="8,8.5 11,6 11,11" fill="#58b030" shape-rendering="auto"/></svg>
<svg style="left:226px;top:116px" width="26" height="32" viewBox="0 0 26 32" shape-rendering="crispEdges"><defs><linearGradient id="hg226_116" x1="0" y1="0" x2="1" y2="1"><stop offset="0" stop-color="#6a82dc"/><stop offset="1" stop-color="#3f63cf"/></linearGradient></defs><rect width="26" height="32" fill="#2b3ba8"/><rect x="0" y="2" width="6" height="28" fill="#3a52c4"/><rect x="0" y="18" width="6" height="12" fill="#3b4a8c"/><rect x="6" y="2" width="18" height="28" fill="url(#hg226_116)"/><rect x="0" y="30" width="26" height="2" fill="#2a3a78"/><g fill="#fff"><rect x="10" y="6" width="2" height="4"/><rect x="12" y="4" width="6" height="2"/><rect x="18" y="6" width="2" height="6"/><rect x="16" y="12" width="2" height="2"/><rect x="14" y="14" width="2" height="2"/><rect x="12" y="16" width="4" height="6"/><rect x="12" y="24" width="4" height="3"/></g><g fill="#26337a" opacity=".7"><rect x="20" y="8" width="2" height="6"/><rect x="16" y="16" width="2" height="6"/><rect x="16" y="25" width="2" height="3"/></g></svg>
<svg style="left:272px;top:122px" width="32" height="26" viewBox="0 0 16 13" shape-rendering="crispEdges"><rect x="0" y="0" width="16" height="13" fill="#8a8f8f"/><rect x="1" y="1" width="14" height="1" fill="#e6e8f0"/><rect x="10" y="1" width="1" height="1" fill="#6a7a98"/><rect x="12" y="1" width="1" height="1" fill="#6a7a98"/><rect x="1" y="2" width="14" height="1" fill="#5a6a88"/><rect x="1" y="3" width="14" height="1" fill="#e6e8f0"/><rect x="1" y="4" width="14" height="1" fill="#9aa0a8"/><rect x="1" y="5" width="8" height="7" fill="#f7f7f5"/><rect x="10" y="5" width="1" height="7" fill="#5a6a88"/><rect x="9" y="5" width="1" height="7" fill="#e4e4e4"/><rect x="11" y="5" width="4" height="7" fill="#fff"/><rect x="12" y="6" width="2" height="1" fill="#3a6ac0"/><rect x="12" y="8" width="2" height="1" fill="#3a6ac0"/><rect x="12" y="10" width="2" height="1" fill="#3a6ac0"/><polygon points="7,8.5 4,6 4,11" fill="#58b030" shape-rendering="auto"/></svg>
<svg style="left:418px;top:330px" width="32" height="32" viewBox="0 0 16 16" shape-rendering="crispEdges"><rect x="0" y="0" width="14" height="12" fill="#8a8f98"/><rect x="1" y="1" width="12" height="10" fill="#fff"/><rect x="1" y="1" width="12" height="1" fill="#e4e8f4"/><rect x="9" y="1" width="1" height="1" fill="#6a7a98"/><rect x="11" y="1" width="1" height="1" fill="#6a7a98"/><rect x="1" y="2" width="12" height="1" fill="#5a6a85"/><rect x="1" y="3" width="12" height="1" fill="#e4e8f4"/><rect x="1" y="4" width="12" height="1" fill="#9aa0a8"/><rect x="2" y="3" width="14" height="12" fill="#8a8f98"/><rect x="3" y="4" width="12" height="10" fill="#fff"/><rect x="3" y="4" width="12" height="1" fill="#e4e8f4"/><rect x="11" y="4" width="1" height="1" fill="#6a7a98"/><rect x="13" y="4" width="1" height="1" fill="#6a7a98"/><rect x="3" y="5" width="12" height="1" fill="#5a6a85"/><rect x="3" y="6" width="12" height="1" fill="#e4e8f4"/><rect x="3" y="7" width="12" height="1" fill="#9aa0a8"/><g shape-rendering="auto"><circle cx="9" cy="11.5" r="3.2" fill="#b4c8de" stroke="#86a6ca" stroke-width="1.5" stroke-dasharray="1.15 1.0"/><circle cx="9" cy="11.5" r="2.3000000000000003" fill="#a3bcd8"/><circle cx="9" cy="11.5" r="1.2000000000000002" fill="#8fadd0"/></g><rect x="7.5" y="11.0" width="3" height="1" fill="#fff"/><rect x="8.5" y="10.0" width="1" height="3" fill="#fff"/><circle cx="12.3" cy="12.3" r="3.1" fill="#fafafa" stroke="#a8aca8" stroke-width="0.8" shape-rendering="auto"/><path d="M12.3 10.2 L14.4 12.5 H13.2 V14.4 H11.4 V12.5 H10.2 Z" fill="#58b838" shape-rendering="auto"/></svg>
<svg style="left:728px;top:330px" width="32" height="32" viewBox="0 0 32 32"><defs><radialGradient id="sg728_330" cx=".35" cy=".3" r=".8"><stop offset="0" stop-color="#fff"/><stop offset=".6" stop-color="#f1f1f1"/><stop offset="1" stop-color="#cfcfcf"/></radialGradient></defs><circle cx="16" cy="16" r="14.6" fill="url(#sg728_330)" stroke="#9a9c9a" stroke-width="2.2"/><path d="M16 8 L24 16 H20 V24 H12 V16 H8 Z" fill="#58b838"/><path d="M16 8 L24 16 H20 V24 H12 V16 H8 Z" fill="none" stroke="#7ad050" stroke-width=".8"/></svg>
<svg style="left:1146px;top:1220px" width="32" height="32" viewBox="0 0 32 32"><defs><radialGradient id="sg1146_1220" cx=".35" cy=".3" r=".8"><stop offset="0" stop-color="#fff"/><stop offset=".6" stop-color="#f1f1f1"/><stop offset="1" stop-color="#cfcfcf"/></radialGradient></defs><circle cx="16" cy="16" r="14.6" fill="url(#sg1146_1220)" stroke="#9a9c9a" stroke-width="2.2"/><path d="M16 8 L24 16 H20 V24 H12 V16 H8 Z" fill="#58b838"/><path d="M16 8 L24 16 H20 V24 H12 V16 H8 Z" fill="none" stroke="#7ad050" stroke-width=".8"/></svg>
<svg style="left:1146px;top:1314px" width="32" height="32" viewBox="0 0 32 32"><defs><radialGradient id="sg1146_1314" cx=".35" cy=".3" r=".8"><stop offset="0" stop-color="#fff"/><stop offset=".6" stop-color="#f1f1f1"/><stop offset="1" stop-color="#cfcfcf"/></radialGradient></defs><circle cx="16" cy="16" r="14.6" fill="url(#sg1146_1314)" stroke="#9a9c9a" stroke-width="2.2"/><path d="M16 8 L24 16 H20 V24 H12 V16 H8 Z" fill="#58b838"/><path d="M16 8 L24 16 H20 V24 H12 V16 H8 Z" fill="none" stroke="#7ad050" stroke-width=".8"/></svg>
<svg style="left:1146px;top:1360px" width="32" height="32" viewBox="0 0 32 32"><defs><radialGradient id="sg1146_1360" cx=".35" cy=".3" r=".8"><stop offset="0" stop-color="#fff"/><stop offset=".6" stop-color="#f1f1f1"/><stop offset="1" stop-color="#cfcfcf"/></radialGradient></defs><circle cx="16" cy="16" r="14.6" fill="url(#sg1146_1360)" stroke="#9a9c9a" stroke-width="2.2"/><path d="M16 25 L24 17 H20 V9 H12 V17 H8 Z" fill="#c83030"/><path d="M16 25 L24 17 H20 V9 H12 V17 H8 Z" fill="none" stroke="#e05050" stroke-width=".8"/></svg>
<svg style="left:1146px;top:1406px" width="32" height="32" viewBox="0 0 32 32"><defs><radialGradient id="sg1146_1406" cx=".35" cy=".3" r=".8"><stop offset="0" stop-color="#fff"/><stop offset=".6" stop-color="#f1f1f1"/><stop offset="1" stop-color="#cfcfcf"/></radialGradient></defs><circle cx="16" cy="16" r="14.6" fill="url(#sg1146_1406)" stroke="#9a9c9a" stroke-width="2.2"/><path d="M16 8 L24 16 H20 V24 H12 V16 H8 Z" fill="#58b838"/><path d="M16 8 L24 16 H20 V24 H12 V16 H8 Z" fill="none" stroke="#7ad050" stroke-width=".8"/></svg>
<svg style="left:1468px;top:232px" width="28" height="28" viewBox="0 0 28 28"><path d="M12 16 L4 24" stroke="#b8bcc0" stroke-width="4" stroke-linecap="round"/><circle cx="18" cy="10" r="7.5" fill="#dcebf8" stroke="#b4bcc6" stroke-width="2"/><circle cx="16.5" cy="8.5" r="3" fill="#f4f9ff"/></svg>
<svg style="left:1621px;top:242px" width="20" height="10"><path d="M0 0 H20 L10 10 Z" fill="#000"/></svg>
<svg style="left:1703px;top:240px" width="20" height="10"><path d="M0 0 H20 L10 10 Z" fill="#000"/></svg>
<svg style="left:1660px;top:232px" width="28" height="28" viewBox="0 0 14 14" shape-rendering="crispEdges"><rect x="0" y="0" width="14" height="14" fill="#4c4c4c"/><rect x="2" y="1" width="10" height="7" fill="#f4f4f2"/><rect x="1" y="1" width="1" height="6" fill="#6a6a6a"/><rect x="12" y="1" width="1" height="6" fill="#6a6a6a"/><rect x="2" y="9" width="9" height="4" fill="#a8a8a8"/><rect x="3" y="10" width="2" height="3" fill="#3c3c3c"/><rect x="6" y="10" width="4" height="3" fill="#c8c8c8"/></svg>
<svg style="left:1743px;top:231px" width="30" height="30" viewBox="0 0 30 30"><defs><linearGradient id="rcb" x1="0" y1="0" x2="0" y2="1"><stop offset="0" stop-color="#fdfdfd"/><stop offset=".5" stop-color="#e9e9e9"/><stop offset="1" stop-color="#cfcfcf"/></linearGradient></defs><circle cx="15" cy="15" r="14" fill="url(#rcb)" stroke="#b8b8b8" stroke-width="1"/><path d="M7.5 12.5 L15 20 L22.5 12.5" stroke="#111" stroke-width="3.4" fill="none"/></svg>
<svg style="left:413px;top:989px" width="11" height="16"><path d="M9 1 L2 8 L9 15" stroke="#bcbebb" stroke-width="2.2" fill="none"/></svg>
<svg style="left:1762px;top:989px" width="11" height="16"><path d="M2 1 L9 8 L2 15" stroke="#bcbebb" stroke-width="2.2" fill="none"/></svg>
<svg style="left:421px;top:1481px" width="11" height="16"><path d="M9 1 L2 8 L9 15" stroke="#bcbebb" stroke-width="2.2" fill="none"/></svg>
<svg style="left:1756px;top:1481px" width="11" height="16"><path d="M2 1 L9 8 L2 15" stroke="#bcbebb" stroke-width="2.2" fill="none"/></svg>
<svg style="left:412px;top:1068px" width="22" height="16"><path d="M2 3 L11 12 L20 3" stroke="#5c5c5c" stroke-width="5" fill="none"/></svg>
<svg style="left:457px;top:1045px" width="66" height="64" viewBox="0 0 66 64"><defs><radialGradient id="bsg" cx=".35" cy=".3" r=".8"><stop offset="0" stop-color="#fff"/><stop offset=".6" stop-color="#f1f1f1"/><stop offset="1" stop-color="#cfcfcf"/></radialGradient></defs><rect x="1" y="1" width="44" height="38" fill="#fff" stroke="#8a9498" stroke-width="2"/><rect x="3" y="3" width="40" height="3" fill="#dfe3ee"/><rect x="3" y="6" width="40" height="2" fill="#6a7a96"/><rect x="3" y="8" width="40" height="3" fill="#dfe3ee"/><rect x="3" y="11" width="40" height="1.5" fill="#a4acb8"/><rect x="31" y="3" width="2" height="2" fill="#fff"/><rect x="35" y="3" width="2" height="2" fill="#fff"/><rect x="39" y="3" width="2" height="2" fill="#fff"/><rect x="9" y="13" width="44" height="38" fill="#fff" stroke="#8a9498" stroke-width="2"/><rect x="11" y="15" width="40" height="3" fill="#dfe3ee"/><rect x="11" y="18" width="40" height="2" fill="#6a7a96"/><rect x="11" y="20" width="40" height="3" fill="#dfe3ee"/><rect x="11" y="23" width="40" height="1.5" fill="#a4acb8"/><rect x="39" y="15" width="2" height="2" fill="#fff"/><rect x="43" y="15" width="2" height="2" fill="#fff"/><rect x="47" y="15" width="2" height="2" fill="#fff"/><circle cx="36" cy="38" r="12" fill="#c4d6ea" stroke="#a8c0dc" stroke-width="4" stroke-dasharray="4 3"/><circle cx="48" cy="46" r="14.6" fill="url(#bsg)" stroke="#9a9c9a" stroke-width="2"/><path d="M48 37 L56 45.5 H52 V54 H44 V45.5 H40 Z" fill="#52b436"/></svg>
<svg style="left:0;top:0" width="0" height="0"><defs><linearGradient id="mong" x1="0" y1="0" x2="0" y2="1"><stop offset="0" stop-color="#a8bcfa"/><stop offset="1" stop-color="#2a48d0"/></linearGradient></defs></svg>
<svg style="left:468px;top:1222px" width="32" height="32" viewBox="0 0 16 16" shape-rendering="crispEdges"><rect x="2" y="0" width="12" height="15" fill="#9a9a9a"/><rect x="2" y="0" width="12" height="1" fill="#4a5faa"/><rect x="13" y="0" width="1" height="14" fill="#4a5faa"/><rect x="3" y="1" width="10" height="13" fill="#f2f6f8"/><rect x="12" y="1" width="1" height="13" fill="#c8ccd0"/><rect x="0" y="2" width="1" height="1" fill="#808880"/><rect x="1" y="1" width="2" height="1" fill="#585858"/><rect x="0" y="4" width="1" height="1" fill="#808880"/><rect x="1" y="3" width="2" height="1" fill="#585858"/><rect x="0" y="6" width="1" height="1" fill="#808880"/><rect x="1" y="5" width="2" height="1" fill="#585858"/><rect x="0" y="8" width="1" height="1" fill="#808880"/><rect x="1" y="7" width="2" height="1" fill="#585858"/><rect x="0" y="10" width="1" height="1" fill="#808880"/><rect x="1" y="9" width="2" height="1" fill="#585858"/><rect x="0" y="12" width="1" height="1" fill="#808880"/><rect x="1" y="11" width="2" height="1" fill="#585858"/><rect x="0" y="14" width="1" height="1" fill="#808880"/><rect x="1" y="13" width="2" height="1" fill="#585858"/><path d="M4.2 5.2 L5.5 6.8 L8 3" stroke="#2a80c8" stroke-width="1.1" fill="none" shape-rendering="auto"/><rect x="8" y="6" width="3" height="1" fill="#8a8cb0"/><rect x="5" y="9" width="3" height="1" fill="#c0c4c4"/><g shape-rendering="auto"><circle cx="11.5" cy="11.6" r="3.1" fill="#fbfbfb" stroke="#b4b8b4" stroke-width=".9" stroke-dasharray="1.2 .5"/><path d="M11.5 9.3 L13.8 11.799999999999999 H12.5 V13.8 H10.5 V11.799999999999999 H9.2 Z" fill="#4fae34"/></g></svg>
<div style="left:434px;top:1322px;width:18px;height:18px;background:linear-gradient(135deg,#fff,#e4e0d6);border:2px solid #7c9cc2;"></div>
<div style="left:438px;top:1330px;width:10px;height:2px;background:#000;"></div>
<svg style="left:468px;top:1316px" width="32" height="32" viewBox="0 0 16 16" shape-rendering="crispEdges"><rect x="4" y="0" width="10" height="8" fill="#c4c4b8"/><rect x="4" y="0" width="10" height="1" fill="#d8d8cc"/><rect x="13" y="0" width="1" height="8" fill="#a8a89c"/><rect x="5" y="1" width="8" height="6" fill="#0a0ac8"/><rect x="9.0" y="1" width="4.0" height="6" fill="url(#mong)"/><rect x="0" y="2" width="4" height="8" fill="#b4b4b4"/><rect x="0" y="2" width="1" height="8" fill="#d0d0d0"/><rect x="3" y="2" width="1" height="8" fill="#909090"/><rect x="1" y="3" width="2" height="1" fill="#404040"/><rect x="1" y="4" width="2" height="1" fill="#68e038"/><rect x="0" y="9" width="4" height="1" fill="#8a8a8a"/><rect x="7" y="8" width="4" height="1" fill="#b0b0a8"/><rect x="8" y="9" width="1" height="4" fill="#a0a0a0"/><rect x="4" y="13" width="3" height="1" fill="#484848"/><rect x="7" y="12.5" width="1" height="1.5" fill="#a86820"/><g shape-rendering="auto"><circle cx="11.5" cy="11.6" r="3.1" fill="#fbfbfb" stroke="#b4b8b4" stroke-width=".9" stroke-dasharray="1.2 .5"/><path d="M11.5 9.3 L13.8 11.799999999999999 H12.5 V13.8 H10.5 V11.799999999999999 H9.2 Z" fill="#4fae34"/></g></svg>
<svg style="left:504px;top:1360px" width="32" height="32" viewBox="0 0 16 16" shape-rendering="crispEdges"><rect x="6" y="0" width="10" height="8" fill="#c4c4b8"/><rect x="6" y="0" width="10" height="1" fill="#d8d8cc"/><rect x="15" y="0" width="1" height="8" fill="#a8a89c"/><rect x="7" y="1" width="8" height="6" fill="#0a0ac8"/><rect x="11.0" y="1" width="4.0" height="6" fill="url(#mong)"/><rect x="0" y="6" width="6" height="10" fill="#a7b2ba"/><rect x="0" y="6" width="1" height="10" fill="#c9cdd1"/><rect x="5" y="6" width="1" height="10" fill="#6f7d87"/><rect x="1" y="6" width="4" height="1" fill="#2f4f5c"/><rect x="3" y="6" width="1" height="1" fill="#101010"/><rect x="1" y="7" width="4" height="1" fill="#f4f8f8"/><rect x="1" y="8" width="4" height="1" fill="#7e8a92"/><rect x="1" y="9" width="4" height="1" fill="#f4f8f8"/><rect x="1" y="10" width="4" height="1" fill="#7e8a92"/><rect x="0" y="15" width="6" height="1" fill="#7d8a93"/><rect x="3" y="13" width="2" height="2" fill="#8ae030"/><rect x="3" y="13" width="2" height="1" fill="#c8dc38"/><rect x="9" y="8" width="4" height="1" fill="#b0b0a8"/><g shape-rendering="auto"><circle cx="12" cy="12.3" r="3.2" fill="#fbfbfb" stroke="#b4b8b4" stroke-width=".9" stroke-dasharray="1.2 .5"/><path d="M12 14.600000000000001 L14.3 12.100000000000001 H13 V10.100000000000001 H11 V12.100000000000001 H9.7 Z" fill="#c8352c"/></g><rect x="7" y="15" width="1" height="1" fill="#000"/><rect x="9" y="15" width="1" height="1" fill="#000"/><rect x="10" y="15" width="5" height="1" fill="#c4c8c4"/></svg>
<svg style="left:504px;top:1406px" width="32" height="32" viewBox="0 0 16 16" shape-rendering="crispEdges"><rect x="6" y="0" width="10" height="8" fill="#c4c4b8"/><rect x="6" y="0" width="10" height="1" fill="#d8d8cc"/><rect x="15" y="0" width="1" height="8" fill="#a8a89c"/><rect x="7" y="1" width="8" height="6" fill="#0a0ac8"/><rect x="11.0" y="1" width="4.0" height="6" fill="url(#mong)"/><rect x="0" y="6" width="6" height="10" fill="#a7b2ba"/><rect x="0" y="6" width="1" height="10" fill="#c9cdd1"/><rect x="5" y="6" width="1" height="10" fill="#6f7d87"/><rect x="1" y="6" width="4" height="1" fill="#2f4f5c"/><rect x="3" y="6" width="1" height="1" fill="#101010"/><rect x="1" y="7" width="4" height="1" fill="#f4f8f8"/><rect x="1" y="8" width="4" height="1" fill="#7e8a92"/><rect x="1" y="9" width="4" height="1" fill="#f4f8f8"/><rect x="1" y="10" width="4" height="1" fill="#7e8a92"/><rect x="0" y="15" width="6" height="1" fill="#7d8a93"/><rect x="3" y="13" width="2" height="2" fill="#8ae030"/><rect x="3" y="13" width="2" height="1" fill="#c8dc38"/><rect x="9" y="8" width="4" height="1" fill="#b0b0a8"/><g shape-rendering="auto"><circle cx="12" cy="12.3" r="3.2" fill="#fbfbfb" stroke="#b4b8b4" stroke-width=".9" stroke-dasharray="1.2 .5"/><path d="M12 10.0 L14.3 12.5 H13 V14.5 H11 V12.5 H9.7 Z" fill="#4fae34"/></g><rect x="7" y="15" width="1" height="1" fill="#000"/><rect x="9" y="15" width="1" height="1" fill="#000"/><rect x="10" y="15" width="5" height="1" fill="#c4c8c4"/></svg>
<svg style="left:2284px;top:242px" width="18" height="10"><path d="M0 10 L9 0 L18 10 Z" fill="#000"/></svg>
<svg style="left:2284px;top:600px" width="18" height="10"><path d="M0 10 L9 0 L18 10 Z" fill="#000"/></svg>
<svg style="left:2290px;top:337px" width="10" height="18"><path d="M0 0 L10 9 L0 18 Z" fill="#000"/></svg>
<svg style="left:2290px;top:437px" width="10" height="18"><path d="M0 0 L10 9 L0 18 Z" fill="#000"/></svg>
<svg style="left:2290px;top:742px" width="10" height="18"><path d="M0 0 L10 9 L0 18 Z" fill="#000"/></svg>
<svg style="left:2290px;top:792px" width="10" height="18"><path d="M0 0 L10 9 L0 18 Z" fill="#000"/></svg>
<svg style="left:2290px;top:989px" width="10" height="18"><path d="M0 0 L10 9 L0 18 Z" fill="#000"/></svg>
<svg style="left:2290px;top:1039px" width="10" height="18"><path d="M0 0 L10 9 L0 18 Z" fill="#000"/></svg>
<svg style="left:1814px;top:280px" width="32" height="32" viewBox="0 0 16 16" shape-rendering="crispEdges"><rect x="0" y="0" width="6" height="10" fill="#a7b2ba"/><rect x="0" y="0" width="1" height="10" fill="#c9cdd1"/><rect x="5" y="0" width="1" height="10" fill="#6f7d87"/><rect x="1" y="0" width="4" height="1" fill="#2f4f5c"/><rect x="3" y="0" width="1" height="1" fill="#101010"/><rect x="1" y="1" width="4" height="1" fill="#f4f8f8"/><rect x="1" y="2" width="4" height="1" fill="#7e8a92"/><rect x="1" y="3" width="4" height="1" fill="#f4f8f8"/><rect x="1" y="4" width="4" height="1" fill="#7e8a92"/><rect x="2" y="7" width="1" height="2" fill="#7ad022"/><rect x="0" y="9" width="6" height="1" fill="#7d8a93"/><rect x="5" y="3" width="10" height="8" fill="#8e9096"/><rect x="6" y="5" width="8" height="5" fill="#fff"/><path d="M1 6.5h6v-2.5l4 3.5-4 3.5v-2.5h-6z" fill="#62cc44" shape-rendering="auto"/><rect x="2" y="6" width="5" height="1" fill="#9cf080"/><rect x="3" y="7" width="2" height="2" fill="#d8dc38"/><g shape-rendering="auto"><circle cx="10.5" cy="11" r="3.6" fill="#b4c8de" stroke="#86a6ca" stroke-width="1.5" stroke-dasharray="1.15 1.0"/><circle cx="10.5" cy="11" r="2.7" fill="#a3bcd8"/><circle cx="10.5" cy="11" r="1.6" fill="#8fadd0"/></g><rect x="9.0" y="10.5" width="3" height="1" fill="#fff"/><rect x="10.0" y="9.5" width="1" height="3" fill="#fff"/><rect x="9.5" y="11.5" width="3" height="3" fill="#fff"/><path d="M2.2 13.8h4.6v-1.6h-3v-1.4l-1.6 1.4z" fill="#5cd040"/></svg>
<svg style="left:1814px;top:380px" width="34" height="32" viewBox="0 0 17 16" shape-rendering="crispEdges"><rect x="0" y="0" width="13" height="12" fill="#8a8f98"/><rect x="1" y="1" width="11" height="10" fill="#fff"/><rect x="1" y="1" width="11" height="1" fill="#e4e8f4"/><rect x="8" y="1" width="1" height="1" fill="#6a7a98"/><rect x="10" y="1" width="1" height="1" fill="#6a7a98"/><rect x="1" y="2" width="11" height="1" fill="#5a6a85"/><rect x="1" y="3" width="11" height="1" fill="#e4e8f4"/><rect x="1" y="4" width="11" height="1" fill="#9aa0a8"/><rect x="3" y="3" width="13" height="12" fill="#8a8f98"/><rect x="4" y="4" width="11" height="10" fill="#fff"/><rect x="4" y="4" width="11" height="1" fill="#e4e8f4"/><rect x="11" y="4" width="1" height="1" fill="#6a7a98"/><rect x="13" y="4" width="1" height="1" fill="#6a7a98"/><rect x="4" y="5" width="11" height="1" fill="#5a6a85"/><rect x="4" y="6" width="11" height="1" fill="#e4e8f4"/><rect x="4" y="7" width="11" height="1" fill="#9aa0a8"/><g shape-rendering="auto"><circle cx="10.5" cy="11" r="4" fill="#b4c8de" stroke="#86a6ca" stroke-width="1.5" stroke-dasharray="1.15 1.0"/><circle cx="10.5" cy="11" r="3.1" fill="#a3bcd8"/><circle cx="10.5" cy="11" r="2" fill="#8fadd0"/></g><rect x="9.0" y="10.5" width="3" height="1" fill="#fff"/><rect x="10.0" y="9.5" width="1" height="3" fill="#fff"/><g shape-rendering="auto"><path d="M11.5 0 L12.4 2.6 L15 1.2 L13.8 3.4 L16.2 3.8 L13.8 4.4 L15 6.6 L12.4 5.2 L11.5 7.6 L10.6 5.2 L8 6.6 L9.2 4.4 L6.8 3.8 L9.2 3.4 L8 1.2 L10.6 2.6 Z" fill="#f0a020"/><circle cx="11.5" cy="3.8" r="1.7" fill="#ffd060"/></g></svg>
<svg style="left:1818px;top:480px" width="26" height="32" viewBox="0 0 13 16" shape-rendering="crispEdges"><path d="M0 0h9l4 4v11h-13z" fill="#f4f6f4" stroke="#a4a6a4" stroke-width="1" shape-rendering="auto"/><rect x="0" y="14.5" width="13" height="1" fill="#707270"/><path d="M9 0v4h4" fill="#e0e2e0" stroke="#b0b2b0" stroke-width=".6" shape-rendering="auto"/><g shape-rendering="auto"><path d="M10.3 9.2a3.8 3.8 0 1 1 -1.4 -3.2" fill="none" stroke="#5cc040" stroke-width="1.9"/><path d="M7.2 10.2h4.4v-4z" fill="#5cc040"/></g></svg>
<svg style="left:1816px;top:530px" width="26" height="32" viewBox="0 0 26 32" shape-rendering="crispEdges"><defs><linearGradient id="hg1816_530" x1="0" y1="0" x2="1" y2="1"><stop offset="0" stop-color="#6a82dc"/><stop offset="1" stop-color="#3f63cf"/></linearGradient></defs><rect width="26" height="32" fill="#2b3ba8"/><rect x="0" y="2" width="6" height="28" fill="#3a52c4"/><rect x="0" y="18" width="6" height="12" fill="#3b4a8c"/><rect x="6" y="2" width="18" height="28" fill="url(#hg1816_530)"/><rect x="0" y="30" width="26" height="2" fill="#2a3a78"/><g fill="#fff"><rect x="10" y="6" width="2" height="4"/><rect x="12" y="4" width="6" height="2"/><rect x="18" y="6" width="2" height="6"/><rect x="16" y="12" width="2" height="2"/><rect x="14" y="14" width="2" height="2"/><rect x="12" y="16" width="4" height="6"/><rect x="12" y="24" width="4" height="3"/></g><g fill="#26337a" opacity=".7"><rect x="20" y="8" width="2" height="6"/><rect x="16" y="16" width="2" height="6"/><rect x="16" y="25" width="2" height="3"/></g></svg>
<svg style="left:1814px;top:638px" width="32" height="32" viewBox="0 0 16 16" shape-rendering="crispEdges"><g shape-rendering="auto"><circle cx="7.8" cy="7.8" r="5.7" fill="none" stroke="#a4bcd6" stroke-width="2.6" stroke-dasharray="2.2 1.38"/><circle cx="7.8" cy="7.8" r="5.0" fill="none" stroke="#c2d2e4" stroke-width="1.7"/></g><rect x="9" y="9" width="8" height="8" fill="#fff"/><rect x="10.5" y="7.5" width="4" height="1" fill="#6a7a90"/><rect x="7.5" y="11.5" width="1" height="3" fill="#6a7a90"/><path d="M9.5 10.5h1.5v-1.5h2v1.5h1.5v1.5h-1.5v3h-2v-3h-1.5z" fill="#3fa424"/></svg>
<svg style="left:1814px;top:686px" width="32" height="32" viewBox="0 0 16 16" shape-rendering="crispEdges"><g shape-rendering="auto"><circle cx="7.8" cy="7.8" r="5.7" fill="none" stroke="#a4bcd6" stroke-width="2.6" stroke-dasharray="2.2 1.38"/><circle cx="7.8" cy="7.8" r="5.0" fill="none" stroke="#c2d2e4" stroke-width="1.7"/></g><rect x="9" y="9" width="8" height="8" fill="#fff"/><rect x="10.5" y="7.5" width="4" height="1" fill="#6a7a90"/><rect x="7.5" y="11.5" width="1" height="3" fill="#6a7a90"/><path d="M11 9h2v3h1.5v1.5h-1.5v1.5h-2v-1.5h-1.5v-1.5h1.5z" fill="#c02c24"/></svg>
<svg style="left:1814px;top:736px" width="32" height="28" viewBox="0 0 16 14" shape-rendering="crispEdges"><rect x="0" y="1" width="16" height="13" fill="#8a8f90"/><rect x="1" y="2" width="14" height="11" fill="#fafafa"/><rect x="1" y="2" width="14" height="1" fill="#e4e8f4"/><rect x="1" y="3" width="14" height="1" fill="#5a6a85"/><rect x="1" y="4" width="14" height="1" fill="#e4e8f4"/><rect x="1" y="5" width="14" height="1" fill="#9aa0a8"/><g shape-rendering="auto"><circle cx="6" cy="10" r="4" fill="#b4c8de" stroke="#86a6ca" stroke-width="1.5" stroke-dasharray="1.15 1.0"/><circle cx="6" cy="10" r="3.1" fill="#a3bcd8"/><circle cx="6" cy="10" r="2" fill="#8fadd0"/></g><rect x="4.5" y="9.5" width="3" height="1" fill="#fff"/><rect x="5.5" y="8.5" width="1" height="3" fill="#fff"/><path d="M6 2h5v-2l5 4.5-5 4.5v-2.5h-5z" fill="#4cb82c" shape-rendering="auto"/><path d="M7 3.2h5v2.8h-5z" fill="#98ec78"/></svg>
<svg style="left:1816px;top:788px" width="28" height="28" viewBox="0 0 28 28"><defs><radialGradient id="prg" cx=".35" cy=".3" r=".8"><stop offset="0" stop-color="#fff"/><stop offset=".6" stop-color="#eee"/><stop offset="1" stop-color="#c8c8c8"/></radialGradient></defs><circle cx="14" cy="14" r="13" fill="url(#prg)" stroke="#a8a8a8" stroke-width="2" stroke-dasharray="4 2"/><path d="M10 6 L16 12 H12 V18 H8 V12 H4 Z" fill="#48a830"/><path d="M18 24 L24 18 H20 V12 H16 V18 H12 Z" fill="#c0302c"/></svg>
<svg style="left:1814px;top:836px" width="32" height="32" viewBox="0 0 16 16" shape-rendering="crispEdges"><rect x="2" y="0" width="12" height="15" fill="#9a9a9a"/><rect x="2" y="0" width="12" height="1" fill="#4a5faa"/><rect x="13" y="0" width="1" height="14" fill="#4a5faa"/><rect x="3" y="1" width="10" height="13" fill="#f2f6f8"/><rect x="12" y="1" width="1" height="13" fill="#c8ccd0"/><rect x="0" y="2" width="1" height="1" fill="#808880"/><rect x="1" y="1" width="2" height="1" fill="#585858"/><rect x="0" y="4" width="1" height="1" fill="#808880"/><rect x="1" y="3" width="2" height="1" fill="#585858"/><rect x="0" y="6" width="1" height="1" fill="#808880"/><rect x="1" y="5" width="2" height="1" fill="#585858"/><rect x="0" y="8" width="1" height="1" fill="#808880"/><rect x="1" y="7" width="2" height="1" fill="#585858"/><rect x="0" y="10" width="1" height="1" fill="#808880"/><rect x="1" y="9" width="2" height="1" fill="#585858"/><rect x="0" y="12" width="1" height="1" fill="#808880"/><rect x="1" y="11" width="2" height="1" fill="#585858"/><rect x="0" y="14" width="1" height="1" fill="#808880"/><rect x="1" y="13" width="2" height="1" fill="#585858"/><rect x="3" y="4" width="9" height="1" fill="#8cb0cc"/><rect x="3" y="6" width="9" height="1" fill="#8cb0cc"/><rect x="3" y="8" width="9" height="1" fill="#8cb0cc"/><rect x="3" y="10" width="9" height="1" fill="#8cb0cc"/><rect x="3" y="12" width="9" height="1" fill="#8cb0cc"/><path d="M5.5 2v6M8.5 2v6M4 3.8h6M4 6.2h6" stroke="#3cac24" stroke-width="1.3" fill="none"/><rect x="9" y="6" width="2" height="3" fill="#3a5ad0"/><path d="M10 8h4l1.2 1.2v4.6l-1.2 1.2h-4l-1.2-1.2v-4.6z" fill="#c0302c" shape-rendering="auto"/><rect x="11" y="10" width="2" height="2" fill="#f8e0e0"/><rect x="11" y="13" width="2" height="1" fill="#f8e0e0"/></svg>
<svg style="left:1814px;top:884px" width="32" height="32" viewBox="0 0 16 16" shape-rendering="crispEdges"><rect x="2" y="0" width="13" height="16" fill="#000"/><rect x="2" y="0" width="12" height="1" fill="#8a8a80"/><rect x="3" y="1" width="11" height="14" fill="#fff"/><rect x="1" y="1" width="3" height="13" fill="#fff"/><rect x="2" y="1" width="1" height="1" fill="#000"/><rect x="1" y="2" width="1" height="1" fill="#000"/><rect x="3" y="2" width="1" height="1" fill="#000"/><rect x="2" y="3" width="1" height="1" fill="#000"/><rect x="1" y="4" width="1" height="1" fill="#000"/><rect x="3" y="4" width="1" height="1" fill="#000"/><rect x="2" y="5" width="1" height="1" fill="#000"/><rect x="1" y="6" width="1" height="1" fill="#000"/><rect x="3" y="6" width="1" height="1" fill="#000"/><rect x="2" y="7" width="1" height="1" fill="#000"/><rect x="1" y="8" width="1" height="1" fill="#000"/><rect x="3" y="8" width="1" height="1" fill="#000"/><rect x="2" y="9" width="1" height="1" fill="#000"/><rect x="1" y="10" width="1" height="1" fill="#000"/><rect x="3" y="10" width="1" height="1" fill="#000"/><rect x="2" y="11" width="1" height="1" fill="#000"/><rect x="1" y="12" width="1" height="1" fill="#000"/><rect x="3" y="12" width="1" height="1" fill="#000"/><rect x="2" y="13" width="1" height="1" fill="#000"/><rect x="2" y="14" width="1" height="2" fill="#000"/><rect x="5" y="4" width="8" height="1" fill="#c8c8c8"/><rect x="5" y="6" width="8" height="1" fill="#c8c8c8"/><rect x="5" y="8" width="8" height="1" fill="#c8c8c8"/><rect x="5" y="10" width="8" height="1" fill="#c8c8c8"/><rect x="5" y="12" width="8" height="1" fill="#c8c8c8"/><rect x="6" y="4" width="1" height="4" fill="#f02010"/><rect x="6" y="9" width="1" height="1" fill="#f02010"/><rect x="7" y="5" width="1" height="4" fill="#909090"/><rect x="10" y="2" width="1" height="1" fill="#1010f0"/><rect x="10" y="4" width="1" height="3" fill="#1010f0"/><rect x="11" y="3" width="1" height="4" fill="#909090"/><rect x="10" y="8" width="1" height="6" fill="#800090"/><rect x="9" y="9" width="1" height="1" fill="#800090"/><rect x="11" y="9" width="1" height="2" fill="#800090"/></svg>
<svg style="left:1814px;top:934px" width="32" height="32" viewBox="0 0 16 16" shape-rendering="crispEdges"><rect x="2" y="9" width="12" height="1" fill="#b0b0b4"/><rect x="0" y="10" width="16" height="4" fill="#707078"/><rect x="1" y="10" width="14" height="4" fill="#c0c0c8"/><rect x="2" y="10" width="12" height="4" fill="#dcdce4"/><rect x="3" y="10" width="8" height="1" fill="#f4f4f8"/><rect x="11" y="11" width="1" height="3" fill="#686870"/><rect x="12" y="11" width="1" height="3" fill="#70e030"/><rect x="13" y="11" width="1" height="3" fill="#585860"/><rect x="1" y="14" width="14" height="1" fill="#b0b0b4"/><rect x="2" y="15" width="12" height="1" fill="#686870"/><path d="M9 0h4v3h3v4h-3v3h-4v-3h-3v-4h3z" fill="#3f9e22"/><path d="M9.7 0.7h2.6v3h3v2.6h-3v3h-2.6v-3h-3v-2.6h3z" fill="#8ee068"/><rect x="10.3" y="1.2" width="1.4" height="7.6" fill="#a4ea84"/><rect x="7.2" y="4.3" width="7.6" height="1.4" fill="#a4ea84"/></svg>
<svg style="left:1814px;top:984px" width="32" height="30" viewBox="0 0 16 15" shape-rendering="crispEdges"><rect x="2" y="0" width="12" height="15" fill="#9a9a9a"/><rect x="2" y="0" width="12" height="1" fill="#4a5faa"/><rect x="13" y="0" width="1" height="14" fill="#4a5faa"/><rect x="3" y="1" width="10" height="13" fill="#f2f6f8"/><rect x="12" y="1" width="1" height="13" fill="#c8ccd0"/><rect x="0" y="2" width="1" height="1" fill="#808880"/><rect x="1" y="1" width="2" height="1" fill="#585858"/><rect x="0" y="4" width="1" height="1" fill="#808880"/><rect x="1" y="3" width="2" height="1" fill="#585858"/><rect x="0" y="6" width="1" height="1" fill="#808880"/><rect x="1" y="5" width="2" height="1" fill="#585858"/><rect x="0" y="8" width="1" height="1" fill="#808880"/><rect x="1" y="7" width="2" height="1" fill="#585858"/><rect x="0" y="10" width="1" height="1" fill="#808880"/><rect x="1" y="9" width="2" height="1" fill="#585858"/><rect x="0" y="12" width="1" height="1" fill="#808880"/><rect x="1" y="11" width="2" height="1" fill="#585858"/><rect x="0" y="14" width="1" height="1" fill="#808880"/><rect x="1" y="13" width="2" height="1" fill="#585858"/><rect x="4" y="5" width="2" height="2" fill="#2a80c8"/><rect x="5" y="7" width="1" height="1" fill="#58a0d8"/><rect x="8" y="6" width="2" height="1" fill="#8a8cb0"/><rect x="4" y="9" width="3" height="2" fill="#c4c8c8"/><rect x="8" y="10" width="3" height="1" fill="#8a8cb0"/></svg>
<svg style="left:1826px;top:982px" width="20" height="20" viewBox="0 0 10 10" shape-rendering="crispEdges"><path d="M3 0h4v3h3v4h-3v3h-4v-3h-3v-4h3z" fill="#3f9e22"/><path d="M3.7 0.7h2.6v3h3v2.6h-3v3h-2.6v-3h-3v-2.6h3z" fill="#8ee068"/><rect x="4.3" y="1.2" width="1.4" height="7.6" fill="#a4ea84"/><rect x="1.2" y="4.3" width="7.6" height="1.4" fill="#a4ea84"/></svg>
<svg style="left:1816px;top:1034px" width="30" height="30" viewBox="0 0 30 30"><defs><linearGradient id="mag" x1="0" y1="0" x2="0" y2="1"><stop offset="0" stop-color="#1f5c9c"/><stop offset=".5" stop-color="#3f88c4"/><stop offset="1" stop-color="#7cc0e4"/></linearGradient><linearGradient id="mab" x1="0" y1="0" x2="0" y2="1"><stop offset="0" stop-color="#2a68a8"/><stop offset="1" stop-color="#7ab8dc"/></linearGradient></defs><rect x="1" y="1" width="28" height="28" rx="1.5" fill="url(#mag)" stroke="url(#mab)" stroke-width="2"/><rect x="3" y="3" width="24" height="24" fill="none" stroke="#5a9cd0" stroke-width="1" opacity=".8"/><path d="M6 12h10v-4l8 7-8 7v-4h-10z" fill="#fff"/></svg>
<svg style="left:1814px;top:1082px" width="32" height="32" viewBox="0 0 32 32"><defs><linearGradient id="rmg" x1="0" y1="0" x2="0" y2="1"><stop offset="0" stop-color="#ec9c9c"/><stop offset=".45" stop-color="#e02c24"/><stop offset="1" stop-color="#d82020"/></linearGradient></defs><path d="M5 1 L16 11 L27 1 L31 6 L21 16 L31 26 L26 31 L16 21 L6 31 L1 26 L11 16 L1 6 Z" fill="url(#rmg)" stroke="#e06060" stroke-width="1" stroke-linejoin="round"/></svg>
<svg style="left:1814px;top:1132px" width="30" height="32" viewBox="0 0 15 16" shape-rendering="crispEdges"><rect x="0" y="0" width="15" height="16" fill="#8e9296"/><rect x="1" y="1" width="13" height="14" fill="#f2f6f6"/><rect x="1" y="1" width="13" height="1" fill="#dfe3e8"/><rect x="12" y="1" width="1" height="1" fill="#4a5aa0"/><rect x="2" y="4" width="11" height="8" fill="#9ea2a6"/><rect x="3" y="5" width="9" height="6" fill="#f8fafa"/><rect x="2" y="4" width="3" height="1" fill="#f2f6f6"/><rect x="6" y="5" width="2" height="1" fill="#c8ccd0"/><rect x="9" y="5" width="2" height="1" fill="#c8ccd0"/><rect x="4" y="8" width="1" height="1" fill="#38b0f0"/><rect x="6" y="8" width="5" height="1" fill="#a0a4a4"/><rect x="4" y="10" width="1" height="1" fill="#909490"/><rect x="6" y="10" width="5" height="1" fill="#a0a4a4"/><rect x="6" y="13" width="3" height="1" fill="#58c0f0"/><rect x="10" y="13" width="3" height="1" fill="#c0c4c0"/></svg>
<svg style="left:1816px;top:1182px" width="26" height="32" viewBox="0 0 26 32" shape-rendering="crispEdges"><defs><linearGradient id="hg1816_1182" x1="0" y1="0" x2="1" y2="1"><stop offset="0" stop-color="#6a82dc"/><stop offset="1" stop-color="#3f63cf"/></linearGradient></defs><rect width="26" height="32" fill="#2b3ba8"/><rect x="0" y="2" width="6" height="28" fill="#3a52c4"/><rect x="0" y="18" width="6" height="12" fill="#3b4a8c"/><rect x="6" y="2" width="18" height="28" fill="url(#hg1816_1182)"/><rect x="0" y="30" width="26" height="2" fill="#2a3a78"/><g fill="#fff"><rect x="10" y="6" width="2" height="4"/><rect x="12" y="4" width="6" height="2"/><rect x="18" y="6" width="2" height="6"/><rect x="16" y="12" width="2" height="2"/><rect x="14" y="14" width="2" height="2"/><rect x="12" y="16" width="4" height="6"/><rect x="12" y="24" width="4" height="3"/></g><g fill="#26337a" opacity=".7"><rect x="20" y="8" width="2" height="6"/><rect x="16" y="16" width="2" height="6"/><rect x="16" y="25" width="2" height="3"/></g></svg>
</body></html>
